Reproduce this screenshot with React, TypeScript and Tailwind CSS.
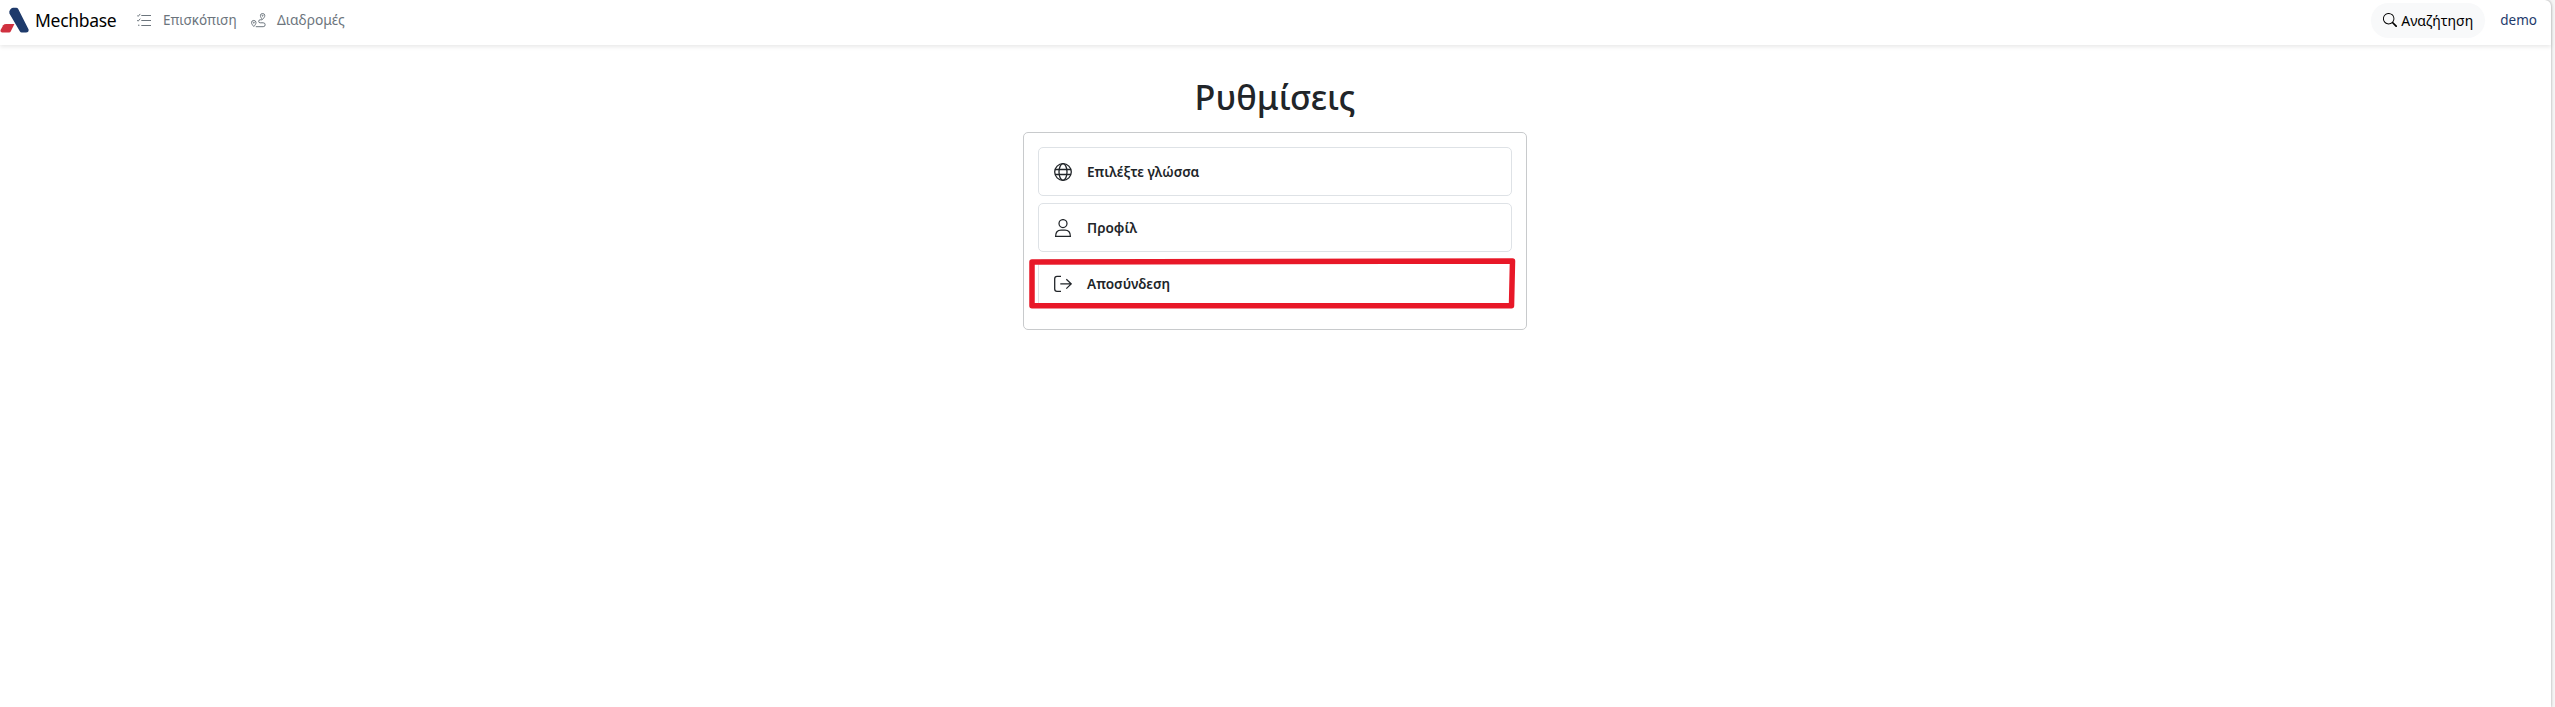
import type { ReactNode } from "react";
import { BsSearch } from "react-icons/bs";

function Logo() {
  return (
    <svg width="29" height="26" viewBox="0 0 29 26" className="shrink-0">
      <path d="M13 0.7h3.200q1.300 0 1.900 1.100L28.600 22.500q.4 3-2.600 3h-4.200q-1.400 0-2-1.200L9.400 6.400q-.6-2.400.9-4Q11.400 .7 13 .7z" fill="#1e3a6b" />
      <path d="M6.200 17h8.200l-3.700 7.600q-.5.9-1.500.9H2.200Q-.2 25.300.7 22.800L3.200 18.300Q4.200 17 6.200 17z" fill="#d0313f" />
    </svg>
  );
}

function ChecksIcon() {
  return (
    <svg width="14" height="14" viewBox="0 0 14 14" fill="none" stroke="currentColor" strokeWidth="1" className="shrink-0">
      <path d="M4.300 2.500H14M4.300 7.500H14M4.300 12.500H14" />
      <path d="M0 2.300l1.100 1.100L3.300 .900M0 7.100l1.100 1.100L3.300 5.700" />
      <circle cx="1.800" cy="12.300" r="0.700" fill="currentColor" stroke="none" />
    </svg>
  );
}

function RouteIcon() {
  return (
    <svg width="15" height="15" viewBox="0 0 15 15" fill="none" stroke="currentColor" strokeWidth="1" className="shrink-0">
      <path d="M11.500 6.500C10 4.800 9.400 3.600 9.400 2.700a2.200 2.200 0 0 1 4.400 0C13.800 3.600 13 4.900 11.500 6.500z" />
      <circle cx="11.600" cy="2.700" r="0.500" />
      <path d="M2.800 13.500C1.200 11.700.5 10.600.5 9.700a2.200 2.200 0 0 1 4.500 0C5 10.600 4.300 11.900 2.800 13.500z" />
      <circle cx="2.800" cy="9.700" r="0.500" />
      <path d="M11 6.800H9.200a1.500 1.500 0 0 0 0 3h3a1.900 1.900 0 0 1 0 3.900H4.800" />
    </svg>
  );
}

function GlobeIcon() {
  return (
    <svg width="18" height="18" viewBox="0 0 18 18" fill="none" stroke="currentColor" strokeWidth="1.300">
      <circle cx="9" cy="9" r="8.300" />
      <ellipse cx="9" cy="9" rx="4" ry="8.300" />
      <path d="M1 6.500h16M1 11.500h16" />
    </svg>
  );
}

function PersonIcon() {
  return (
    <svg width="18" height="18" viewBox="0 0 18 18" fill="none" stroke="currentColor" strokeWidth="1.250">
      <circle cx="9" cy="4.600" r="4" />
      <path d="M1.600 17.400C1.600 13.400 4 11.200 7 11.200h4c3 0 5.400 2.200 5.400 6.200z" />
    </svg>
  );
}

function LogoutIcon() {
  return (
    <svg width="18" height="18" viewBox="0 0 18 18" fill="none" stroke="currentColor" strokeWidth="1.300">
      <path d="M7 1.400H3Q.7 1.400.7 3.700V14Q.7 16.300 3 16.300H7" />
      <path d="M6.300 8.900H17M12.300 4.200L17.200 8.900L12.300 13.600" />
    </svg>
  );
}

function Row({ icon, children }: { icon: ReactNode; children: ReactNode }) {
  return (
    <div className="flex h-[49px] items-center rounded-[5px] border border-[#dee2e6] pl-[15px] text-[#212529]">
      {icon}
      <span className="ml-[15px] text-[13.600px] leading-5 font-semibold">{children}</span>
    </div>
  );
}

export default function App() {
  return (
    <div className="flex h-[707px] bg-[#f5f5f5] font-['Noto_Sans',sans-serif]">
      <div className="w-[2551px] rounded-tr-[6px] bg-white shadow-[0_0_3px_rgba(0,0,0,0.35)]">
        <header className="flex h-[45px] items-center rounded-tr-[6px] pb-[5px] shadow-[0_2px_4px_rgba(0,0,0,0.09)]">
          <Logo />
          <span className="ml-[6px] w-[81px] text-[17.500px] tracking-[-0.300px] text-black">Mechbase</span>
          <nav className="ml-[21px] flex items-center text-[13.500px] text-[#6c757d]">
            <ChecksIcon />
            <span className="ml-[12px] w-[74px] text-[13.500px]">Επισκόπιση</span>
            <span className="ml-[14px] flex"><RouteIcon /></span>
            <span className="ml-[11px] text-[13.800px]">Διαδρομές</span>
          </nav>
          <div className="ml-auto flex h-[35px] w-[114px] items-center rounded-full bg-[#f8f9fa] pl-[12px] text-[14px] text-black">
            <BsSearch />
            <span className="ml-[4px] text-[14px]">Αναζήτηση</span>
          </div>
          <span className="mr-[14px] ml-[15px] text-[13.500px] text-[#1e3a6b]">demo</span>
        </header>
        <main className="ml-[1023px] w-[504px] pt-[31px]">
          <h1 className="h-[56px] text-center text-[34.200px] leading-[42px] font-medium text-[#212529]">Ρυθμίσεις</h1>
          <section className="relative flex h-[198px] flex-col gap-[7px] rounded-[5px] border border-[#c8cacc] p-[14px]">
            <Row icon={<GlobeIcon />}>Επιλέξτε γλώσσα</Row>
            <Row icon={<PersonIcon />}>Προφίλ</Row>
            <Row icon={<LogoutIcon />}>Αποσύνδεση</Row>
            <svg className="absolute top-[124px] left-[4px]" width="490" height="56" viewBox="0 0 490 56" fill="none">
              <path d="M4 5L484.500 4L483.500 48.800H4Z" stroke="#e81828" strokeWidth="5.500" strokeLinejoin="round" />
            </svg>
          </section>
        </main>
      </div>
    </div>
  );
}
